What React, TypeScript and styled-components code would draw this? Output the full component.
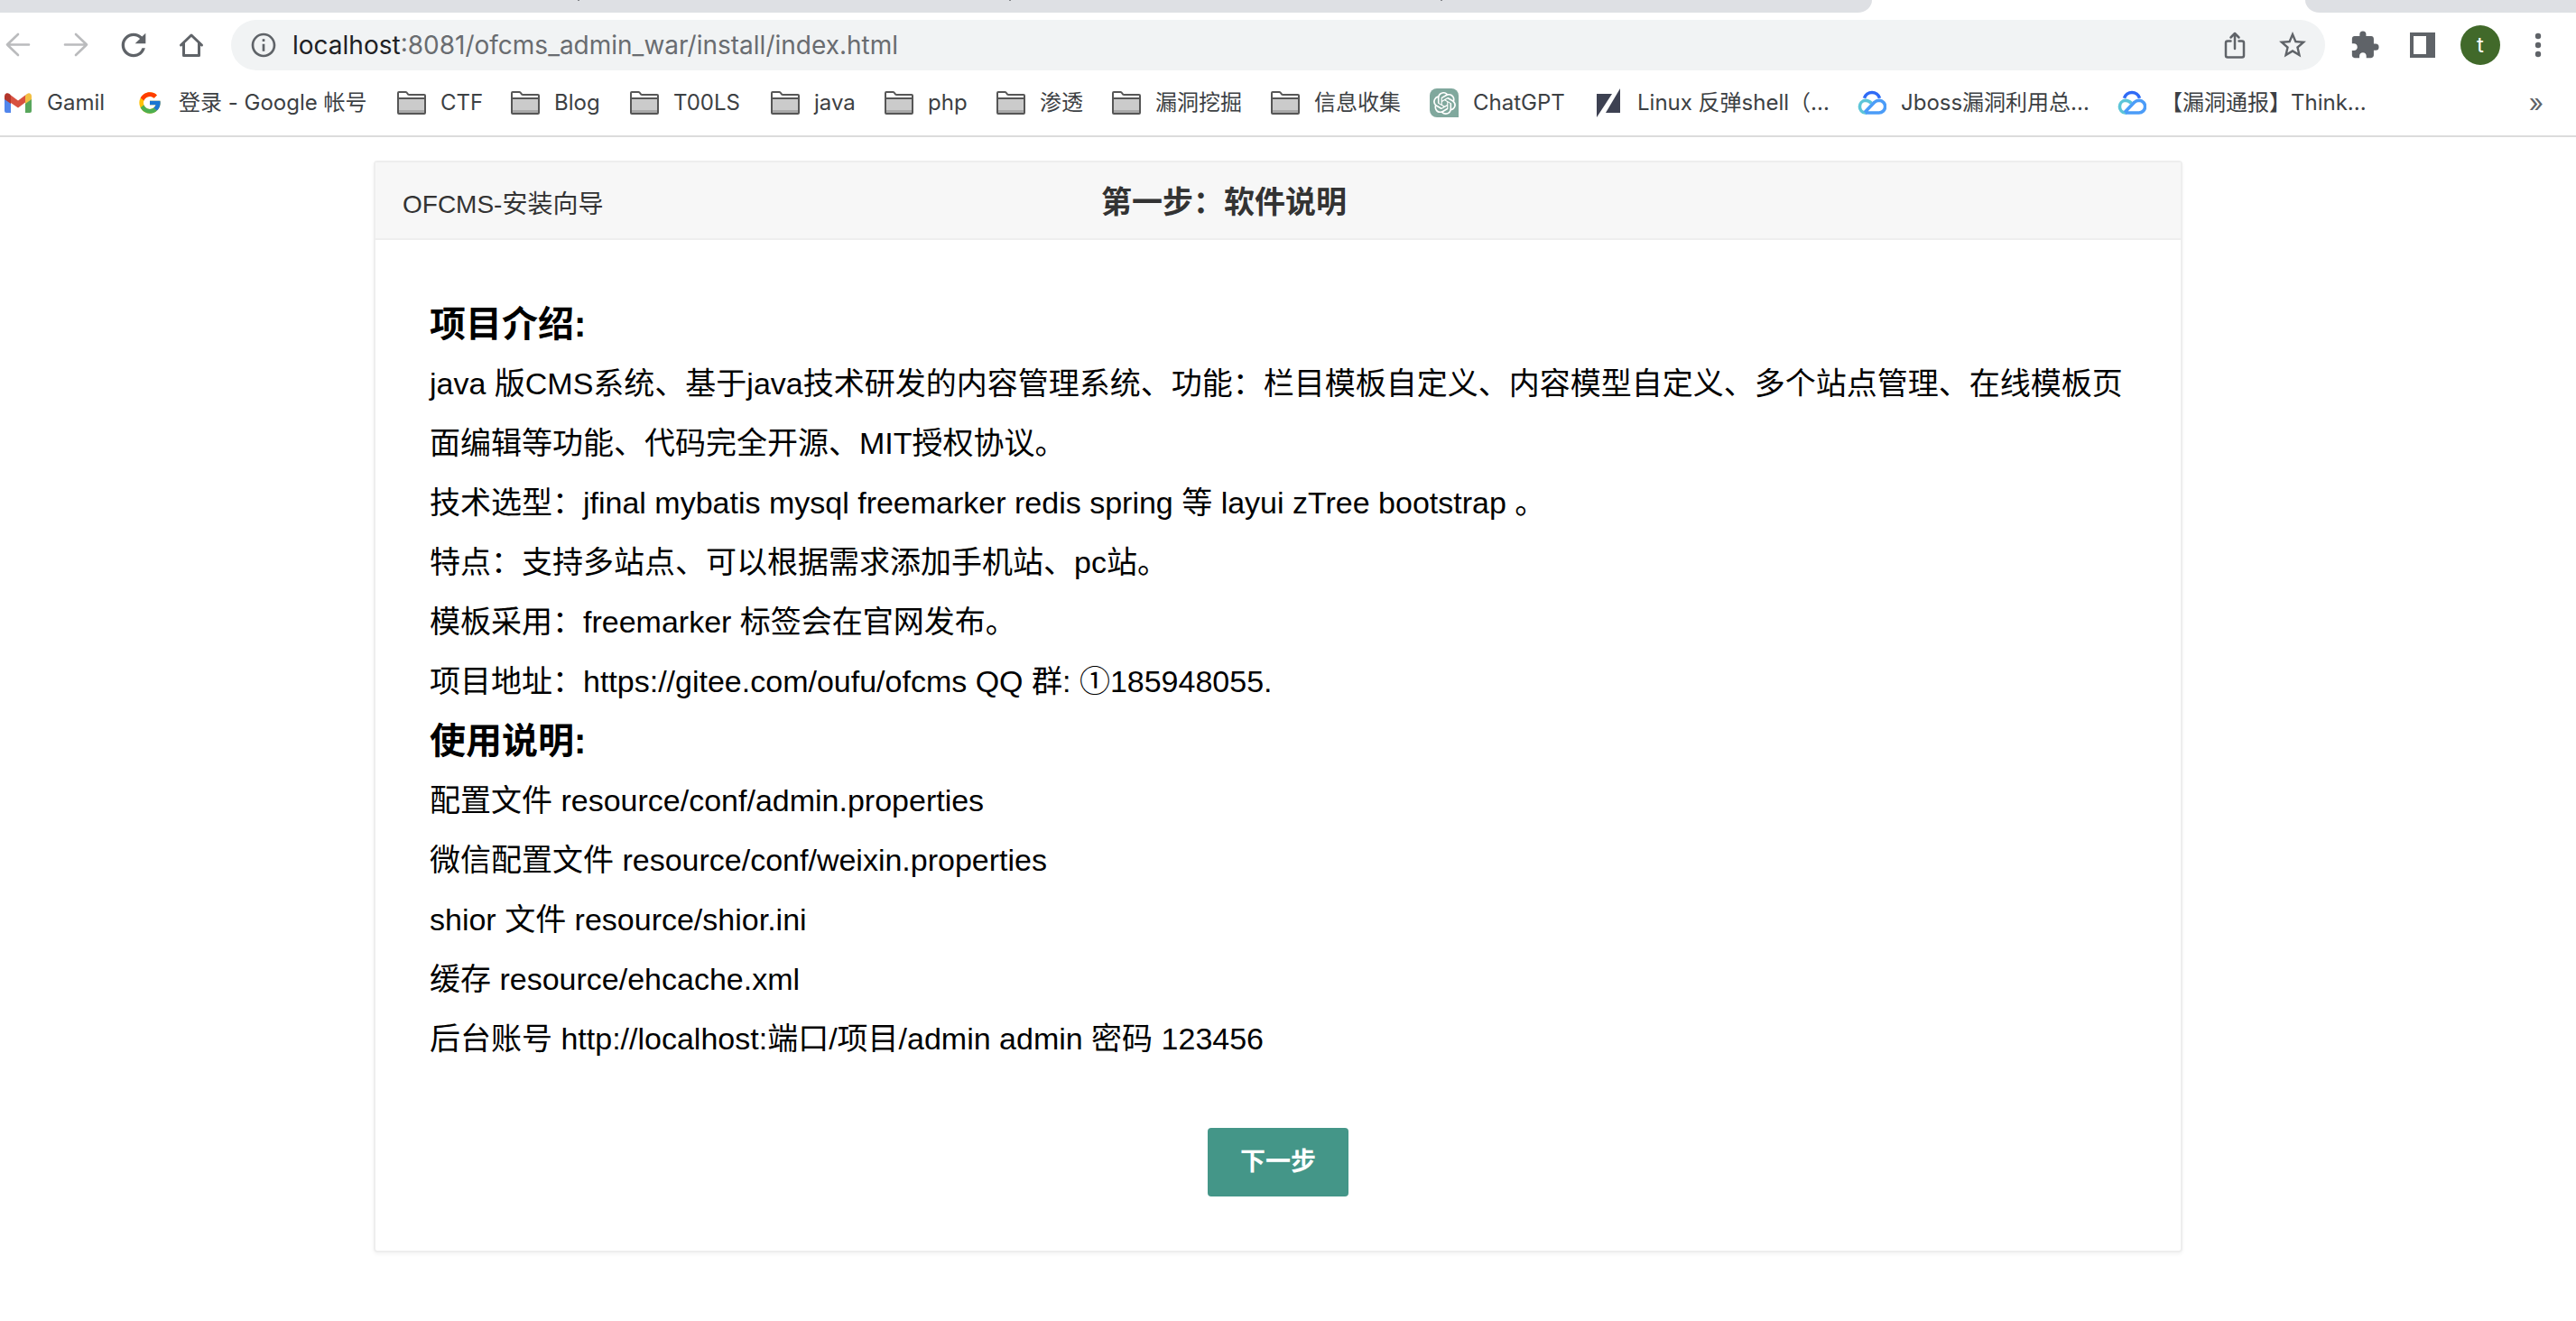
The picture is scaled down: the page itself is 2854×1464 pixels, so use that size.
import React from 'react';
import styled, { createGlobalStyle } from 'styled-components';
import { FcGoogle } from 'react-icons/fc';
import { SiOpenai } from 'react-icons/si';
import { MdExtension, MdInfoOutline, MdRefresh, MdStarBorder } from 'react-icons/md';

const GlobalStyle = createGlobalStyle`
  *, *::before, *::after { box-sizing: border-box; }
  body {
    margin: 0;
    background: #fff;
    font-family: "Liberation Sans", "Noto Sans CJK SC", sans-serif;
  }
  button, input { font: inherit; color: inherit; }
`;

/* ---------- browser chrome ---------- */

const Browser = styled.header`
  font-family: Inter, "Noto Sans CJK SC", sans-serif;
  border-bottom: 2px solid #dcdcdc;
`;

const TabStrip = styled.div`
  display: flex;
  justify-content: space-between;
  height: 14px;
`;

const InactiveTabs = styled.div`
  display: flex;
  flex: 0 0 2074px;
  background: #dee0e4;
  border-bottom-right-radius: 16px 14px;
`;

const TabEdge = styled.div`
  width: 478px;
  height: 1px;
  border-right: 2px solid #85878b;

  &:first-child { width: 642px; }
`;

const StripEnd = styled.div`
  flex: 0 0 300px;
  background: #dee0e4;
  border-bottom-left-radius: 16px 14px;
`;

const Toolbar = styled.nav`
  display: flex;
  align-items: center;
  padding: 8px 22px 0 0;
`;

const NavButtons = styled.div`
  display: flex;
  gap: 24px;
  margin-right: 24px;
`;

const IconButton = styled.button<{ $color?: string }>`
  display: flex;
  align-items: center;
  justify-content: center;
  width: 40px;
  height: 40px;
  padding: 0;
  border: 0;
  background: none;
  color: ${(p) => p.$color ?? '#5f6368'};
`;

const AddressBar = styled.div`
  display: flex;
  flex: 1;
  align-items: center;
  height: 56px;
  padding: 0 16px;
  border-radius: 28px;
  background: #f1f3f4;
  font-size: 28px;
  line-height: 36px;
`;

const Host = styled.label`
  margin-left: 12px;
  color: #202124;
`;

const UrlInput = styled.input`
  flex: 1;
  min-width: 0;
  padding: 0;
  border: 0;
  outline: 0;
  background: none;
  color: #696c70;
`;

const AddressActions = styled.div`
  display: flex;
  gap: 24px;
`;

const ToolbarActions = styled.div`
  display: flex;
  align-items: center;
  gap: 24px;
  margin-left: 24px;
`;

const Avatar = styled.button`
  width: 44px;
  height: 44px;
  margin: 0 -2px;
  padding: 0;
  border: 0;
  border-radius: 50%;
  background: #41692a;
  color: #fff;
  font-size: 24px;
  line-height: 44px;
`;

const BookmarkBar = styled.div`
  display: flex;
  align-items: center;
  height: 72px;
  padding: 0 36px 0 4px;
  color: #3c4043;
  font-size: 24px;
  line-height: 32px;
`;

const Bookmark = styled.a<{ $width: number }>`
  display: flex;
  flex: 0 0 ${(p) => p.$width}px;
  align-items: center;
  gap: 16px;
  padding: 0;
  border: 0;
  background: none;
  color: inherit;
  text-align: left;
  text-decoration: none;
  white-space: nowrap;
`;

const IconBox = styled.span`
  display: flex;
  flex: 0 0 32px;
  align-items: center;
  justify-content: center;
  height: 32px;
`;

const GptTile = styled(IconBox)`
  border-radius: 8px 8px 0 8px;
  background: #80a89d;
  color: #fff;
`;

const More = styled.button`
  margin-left: auto;
  padding: 0;
  border: 0;
  background: none;
  color: #5f6368;
  font-size: 28px;
`;

/* ---------- install wizard ---------- */

const Page = styled.main`
  padding: 26px 22px 60px 0;
`;

const Card = styled.section`
  max-width: 2004px;
  margin: 0 auto;
  border: 2px solid #eee;
  border-radius: 4px;
  box-shadow: 0 2px 4px rgba(0, 0, 0, 0.05);
`;

const CardHeader = styled.div`
  display: grid;
  grid-template-columns: 774px 1fr;
  align-items: baseline;
  align-content: center;
  height: 86px;
  padding: 4px 30px 0;
  border-bottom: 2px solid #eee;
  background: #f7f7f7;
  color: #333;
`;

const Brand = styled.span`
  font-size: 28px;
  line-height: 40px;
`;

const Title = styled.h1`
  margin: 0;
  font-size: 34px;
  font-weight: 700;
  line-height: 48px;
`;

const CardBody = styled.div`
  padding: 60px;
  color: #000;
  font-size: 34px;
  line-height: 66px;
`;

const SectionTitle = styled.h2`
  margin: 0;
  font-size: 40px;
  font-weight: 700;
  line-height: 66px;
`;

const Line = styled.p`
  margin: 0;
`;

const Actions = styled.div`
  display: flex;
  justify-content: center;
  padding-top: 66px;
`;

const NextButton = styled.button`
  height: 76px;
  padding: 0 36px;
  border: 0;
  border-radius: 4px;
  background: #449688;
  color: #fff;
  font-size: 28px;
  font-weight: 700;
  line-height: 40px;
`;

/* ---------- icons ---------- */

const Arrow = ({ flip = false }: { flip?: boolean }) => (
  <svg width="28" height="28" viewBox="0 0 28 28" fill="none" stroke="currentColor" strokeWidth="2.6" strokeLinecap="round" strokeLinejoin="round">
    <path d={flip ? 'M2 13.5H26M14 2L26 13.5L14 25' : 'M26 13.5H2M14 2L2 13.5L14 25'} />
  </svg>
);

const HomeIcon = () => (
  <svg width="28" height="28" viewBox="0 0 28 28" fill="none" stroke="currentColor" strokeWidth="3" strokeLinejoin="round" strokeLinecap="round">
    <path d="M2.5 14L14 3L25.500 14" />
    <path d="M5.500 12V25.500H22.500V12" />
  </svg>
);

const ShareIcon = () => (
  <svg width="24" height="32" viewBox="0 0 24 32" fill="none" stroke="currentColor" strokeWidth="2.500" strokeLinecap="round" strokeLinejoin="round">
    <path d="M7.500 11.500H4Q2 11.500 2 13.500V27.500Q2 29.500 4 29.500H20Q22 29.500 22 27.500V13.500Q22 11.500 20 11.500H16.500" />
    <path d="M12 20V3M7.500 7.500L12 3L16.500 7.500" />
  </svg>
);

const PanelIcon = () => (
  <svg width="28" height="28" viewBox="0 0 28 28">
    <path fill="currentColor" fillRule="evenodd" d="M0 0H28V28H0ZM4 4V24H18V4Z" />
  </svg>
);

const DotsIcon = () => (
  <svg width="8" height="28" viewBox="0 0 8 28" fill="currentColor">
    <circle cx="4" cy="4" r="3.200" />
    <circle cx="4" cy="14" r="3.200" />
    <circle cx="4" cy="24" r="3.200" />
  </svg>
);

const GmailIcon = () => (
  <svg width="30" height="22" viewBox="0 0 30 22">
    <path fill="#5186ec" d="M0 6L7 11V22H2Q0 22 0 20Z" />
    <path fill="#58a65c" d="M23 11L30 6V20Q30 22 28 22H23Z" />
    <path fill="#f2bf42" d="M23 3L25 1Q27.500 -0.500 29.300 1.500Q30 2.300 30 3.500V7L23 12Z" />
    <path fill="#d85140" d="M5 1L15 8.500L25 1L23 3V10.500L15 16.500L7 11V3Z" />
    <path fill="#b3362b" d="M0 3.500Q0 1 2.200 0.300Q4 -0.200 5.500 1L7 2.500V12L0 7Z" />
  </svg>
);

const FolderIcon = () => (
  <svg width="32" height="26" viewBox="0 0 32 26">
    <path fill="#fff" d="M1 2Q1 1 2 1H10L13 4H30Q31 4 31 5V9H1Z" />
    <path fill="#cbcbcb" d="M1 8H31V24H1Z" />
    <path fill="#a9a9a9" d="M1 21H31V24H1Z" />
    <path fill="none" stroke="#565656" strokeWidth="2" strokeLinejoin="round" d="M1 2Q1 1 2 1H9.500Q10.500 1 11 2L12 3.500Q12.500 4 13.500 4H30Q31 4 31 5V24Q31 25 30 25H2Q1 25 1 24ZM1 8H31" />
  </svg>
);

const SlashIcon = () => (
  <svg width="26" height="32" viewBox="0 0 26 32" fill="#3d4152">
    <path d="M0 6H17L0 32Z" />
    <path d="M26 0V27H10Z" />
  </svg>
);

const CloudIcon = () => (
  <svg width="32" height="28" viewBox="0 0 32 28" fill="none" strokeWidth="3.600">
    <path stroke="#5cc5d8" d="M15.500 14.500Q12.500 11.300 8.500 11.300A6.900 6.900 0 0 0 8.500 25H10" />
    <path stroke="#4b9cf8" d="M9 25H23.500A6.800 6.800 0 0 0 24 11.300Q20.800 11.300 18.500 13.500L8 24.500" />
    <path stroke="#2f6bf6" d="M7.500 8.800A8.900 8.900 0 0 1 24.500 8.800" />
  </svg>
);

type BookmarkItem = {
  label: string;
  width: number;
  kind: 'gmail' | 'google' | 'folder' | 'gpt' | 'slash' | 'cloud';
};

const bookmarks: BookmarkItem[] = [
  { label: 'Gamil', width: 146, kind: 'gmail' },
  { label: '登录 - Google 帐号', width: 290, kind: 'google' },
  { label: 'CTF', width: 126, kind: 'folder' },
  { label: 'Blog', width: 132, kind: 'folder' },
  { label: 'T00LS', width: 156, kind: 'folder' },
  { label: 'java', width: 126, kind: 'folder' },
  { label: 'php', width: 124, kind: 'folder' },
  { label: '渗透', width: 128, kind: 'folder' },
  { label: '漏洞挖掘', width: 176, kind: 'folder' },
  { label: '信息收集', width: 176, kind: 'folder' },
  { label: 'ChatGPT', width: 182, kind: 'gpt' },
  { label: 'Linux 反弹shell（...', width: 292, kind: 'slash' },
  { label: 'Jboss漏洞利用总...', width: 288, kind: 'cloud' },
  { label: '【漏洞通报】Think...', width: 288, kind: 'cloud' },
];

const BookmarkIcon = ({ kind }: { kind: BookmarkItem['kind'] }) => {
  switch (kind) {
    case 'gpt':
      return <GptTile><SiOpenai size={25} /></GptTile>;
    case 'gmail':
      return <IconBox><GmailIcon /></IconBox>;
    case 'google':
      return <IconBox><FcGoogle size={28} /></IconBox>;
    case 'slash':
      return <IconBox><SlashIcon /></IconBox>;
    case 'cloud':
      return <IconBox><CloudIcon /></IconBox>;
    default:
      return <IconBox><FolderIcon /></IconBox>;
  }
};

const intro = [
  'java 版CMS系统、基于java技术研发的内容管理系统、功能：栏目模板自定义、内容模型自定义、多个站点管理、在线模板页面编辑等功能、代码完全开源、MIT授权协议。',
  '技术选型：jfinal mybatis mysql freemarker redis spring 等 layui zTree bootstrap 。',
  '特点：支持多站点、可以根据需求添加手机站、pc站。',
  '模板采用：freemarker 标签会在官网发布。',
  '项目地址：https://gitee.com/oufu/ofcms QQ 群: ①185948055.',
];

const usage = [
  '配置文件 resource/conf/admin.properties',
  '微信配置文件 resource/conf/weixin.properties',
  'shior 文件 resource/shior.ini',
  '缓存 resource/ehcache.xml',
  '后台账号 http://localhost:端口/项目/admin admin 密码 123456',
];

export default function App() {
  return (
    <>
      <GlobalStyle />
      <Browser>
        <TabStrip>
          <InactiveTabs>
            <TabEdge />
            <TabEdge />
            <TabEdge />
          </InactiveTabs>
          <StripEnd />
        </TabStrip>
        <Toolbar>
          <NavButtons>
            <IconButton aria-label="Back" $color="#babbbd"><Arrow /></IconButton>
            <IconButton aria-label="Forward" $color="#babbbd"><Arrow flip /></IconButton>
            <IconButton aria-label="Reload"><MdRefresh size={40} /></IconButton>
            <IconButton aria-label="Home"><HomeIcon /></IconButton>
          </NavButtons>
          <AddressBar>
            <IconButton aria-label="Site information"><MdInfoOutline size={32} /></IconButton>
            <Host htmlFor="url">localhost</Host>
            <UrlInput id="url" defaultValue=":8081/ofcms_admin_war/install/index.html" />
            <AddressActions>
              <IconButton aria-label="Share"><ShareIcon /></IconButton>
              <IconButton aria-label="Bookmark this page"><MdStarBorder size={36} /></IconButton>
            </AddressActions>
          </AddressBar>
          <ToolbarActions>
            <IconButton aria-label="Extensions"><MdExtension size={34} /></IconButton>
            <IconButton aria-label="Side panel"><PanelIcon /></IconButton>
            <Avatar aria-label="Profile">t</Avatar>
            <IconButton aria-label="Menu"><DotsIcon /></IconButton>
          </ToolbarActions>
        </Toolbar>
        <BookmarkBar>
          {bookmarks.map((b) => (
            <Bookmark
              key={b.label}
              $width={b.width}
              {...(b.kind === 'folder' ? { as: 'button' as const } : { href: '#' })}
            >
              <BookmarkIcon kind={b.kind} />
              {b.label}
            </Bookmark>
          ))}
          <More aria-label="More bookmarks">»</More>
        </BookmarkBar>
      </Browser>
      <Page>
        <Card>
          <CardHeader>
            <Brand>OFCMS-安装向导</Brand>
            <Title>第一步：软件说明</Title>
          </CardHeader>
          <CardBody>
            <SectionTitle>项目介绍:</SectionTitle>
            {intro.map((t) => <Line key={t}>{t}</Line>)}
            <SectionTitle>使用说明:</SectionTitle>
            {usage.map((t) => <Line key={t}>{t}</Line>)}
            <Actions>
              <NextButton type="button">下一步</NextButton>
            </Actions>
          </CardBody>
        </Card>
      </Page>
    </>
  );
}
